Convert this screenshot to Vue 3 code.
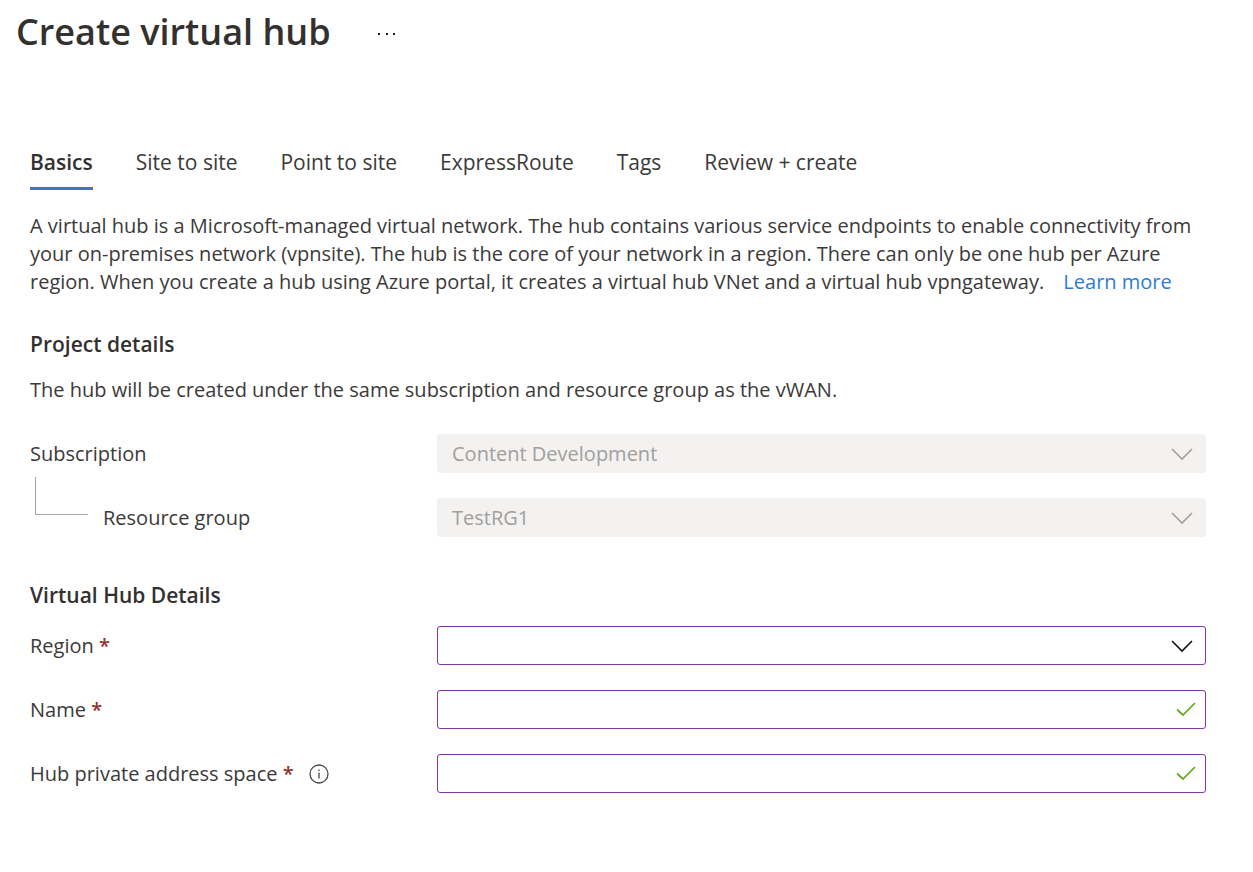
<script setup>
import { ref } from 'vue'

const tabs = ['Basics', 'Site to site', 'Point to site', 'ExpressRoute', 'Tags', 'Review + create']
const activeTab = ref('Basics')
const region = ref('')
const hubName = ref('')
const addressSpace = ref('')
</script>

<template>
  <main class="page">
    <header class="header">
      <h1>Create virtual hub</h1>
      <button class="more" type="button" aria-label="More actions">
        <svg viewBox="0 0 24 8" width="24" height="8" aria-hidden="true">
          <rect x="3" y="5" width="2" height="2" />
          <rect x="11" y="5" width="2" height="2" />
          <rect x="18" y="5" width="2" height="2" />
        </svg>
      </button>
    </header>

    <div class="content">
      <div class="tabs" role="tablist">
        <button
          v-for="tab in tabs"
          :key="tab"
          type="button"
          role="tab"
          class="tab"
          :class="{ active: tab === activeTab }"
          :aria-selected="tab === activeTab"
          @click="activeTab = tab"
        >{{ tab }}</button>
      </div>

      <p class="intro">
        A virtual hub is a Microsoft-managed virtual network. The hub contains various service endpoints to enable connectivity from<br />
        your on-premises network (vpnsite). The hub is the core of your network in a region. There can only be one hub per Azure<br />
        region. When you create a hub using Azure portal, it creates a virtual hub VNet and a virtual hub vpngateway.
        <a class="learn" href="#">Learn more</a>
      </p>

      <section class="project">
        <h2>Project details</h2>
        <p class="note">The hub will be created under the same subscription and resource group as the vWAN.</p>
        <div class="rows">
          <div class="row">
            <label for="subscription">Subscription</label>
            <div class="field">
              <select id="subscription" disabled>
                <option>Content Development</option>
              </select>
              <svg class="chevron muted" viewBox="0 0 24 14" width="24" height="14" aria-hidden="true">
                <path d="M2 2 L12 12 L22 2" />
              </svg>
            </div>
          </div>
          <div class="row">
            <div class="child">
              <span class="branch"></span>
              <label for="group">Resource group</label>
            </div>
            <div class="field">
              <select id="group" disabled>
                <option>TestRG1</option>
              </select>
              <svg class="chevron muted" viewBox="0 0 24 14" width="24" height="14" aria-hidden="true">
                <path d="M2 2 L12 12 L22 2" />
              </svg>
            </div>
          </div>
        </div>
      </section>

      <section class="hub">
        <h2>Virtual Hub Details</h2>
        <div class="rows">
          <div class="row">
            <label for="region">Region <span class="required">*</span></label>
            <div class="field">
              <select id="region" v-model="region" required>
                <option value=""></option>
              </select>
              <svg class="chevron" viewBox="0 0 24 14" width="24" height="14" aria-hidden="true">
                <path d="M2 2 L12 12 L22 2" />
              </svg>
            </div>
          </div>
          <div class="row">
            <label for="name">Name <span class="required">*</span></label>
            <div class="field">
              <input id="name" v-model="hubName" type="text" required />
              <svg class="check" viewBox="0 0 20 14" width="20" height="14" aria-hidden="true">
                <path d="M1 7.5 L7 13 L19 1" />
              </svg>
            </div>
          </div>
          <div class="row">
            <div class="labelled">
              <label for="space">Hub private address space <span class="required">*</span></label>
              <button class="info" type="button" aria-label="About the hub private address space">
                <svg viewBox="0 0 20 20" width="20" height="20" aria-hidden="true">
                  <circle cx="10" cy="10" r="9" />
                  <path d="M10 8.5 V14.5 M10 5.5 V7" />
                </svg>
              </button>
            </div>
            <div class="field">
              <input id="space" v-model="addressSpace" type="text" required />
              <svg class="check" viewBox="0 0 20 14" width="20" height="14" aria-hidden="true">
                <path d="M1 7.5 L7 13 L19 1" />
              </svg>
            </div>
          </div>
        </div>
      </section>
    </div>
  </main>
</template>

<style>
body {
  margin: 0;
  background: #ffffff;
}
</style>

<style scoped>
.page {
  box-sizing: border-box;
  font-family: "Segoe UI", "Open Sans", "Noto Sans", sans-serif;
  font-size: 20px;
  line-height: 28px;
  color: #3b3a39;
}
button,
select,
input {
  font: inherit;
  color: inherit;
}
button {
  padding: 0;
  border: 0;
  background: none;
  cursor: pointer;
}
.header {
  display: flex;
  align-items: center;
  gap: 44px;
  height: 64px;
  padding-left: 16px;
}
h1 {
  margin: 0;
  font-size: 36px;
  line-height: 64px;
  font-weight: 600;
  color: #323130;
  white-space: nowrap;
}
.more {
  display: flex;
}
.more svg {
  fill: #1b1a19;
}
.content {
  padding: 84px 47px 80px 30px;
}
.tabs {
  display: flex;
  gap: 43px;
}
.tab {
  height: 42px;
  padding-bottom: 12px;
  border-bottom: 3px solid transparent;
  font-size: 21px;
  white-space: nowrap;
}
.tab.active {
  border-bottom-color: #3679cc;
  font-weight: 600;
  color: #323130;
}
.intro {
  margin: 22px 0 0;
  white-space: nowrap;
}
.learn {
  margin-left: 14px;
  color: #2b7cd3;
  text-decoration: none;
}
h2 {
  margin: 0;
  font-size: 21px;
  line-height: 28px;
  font-weight: 600;
  color: #323130;
}
.project {
  margin-top: 34px;
}
.note {
  margin: 18px 0 30px;
  line-height: 28px;
}
.rows {
  display: grid;
  gap: 25px;
}
.row {
  display: grid;
  grid-template-columns: 407px 1fr;
  align-items: center;
  height: 39px;
}
.child {
  display: flex;
  align-items: center;
  height: 39px;
}
.branch {
  box-sizing: border-box;
  width: 53px;
  height: 38px;
  margin: 0 15px 44px 5px;
  border: solid #a6a5a4;
  border-width: 0 0 1px 1px;
}
.labelled {
  display: flex;
  align-items: center;
  gap: 15px;
}
.required {
  font-weight: 600;
  color: #932f2d;
}
.info {
  display: flex;
}
.info svg {
  fill: none;
  stroke: #4a4948;
  stroke-width: 1.3;
}
.field {
  position: relative;
}
.field select,
.field input {
  display: block;
  box-sizing: border-box;
  width: 100%;
  height: 39px;
  margin: 0;
  padding: 0 48px 0 14px;
  border: 1px solid #8038a8;
  border-radius: 3px;
  background: #ffffff;
  appearance: none;
}
.field select:disabled {
  border-color: #f3f2f1;
  background: #f3f2f1;
  color: #a19f9d;
  opacity: 1;
}
.chevron,
.check {
  position: absolute;
  fill: none;
  pointer-events: none;
}
.chevron {
  top: 13px;
  right: 12px;
  stroke: #111111;
  stroke-width: 1.6;
}
.chevron.muted {
  stroke: #a19f9d;
}
.check {
  top: 12px;
  right: 10px;
  stroke: #6aa321;
  stroke-width: 1.7;
}
.hub {
  margin-top: 44px;
}
.hub h2 {
  margin-bottom: 17px;
}
</style>
